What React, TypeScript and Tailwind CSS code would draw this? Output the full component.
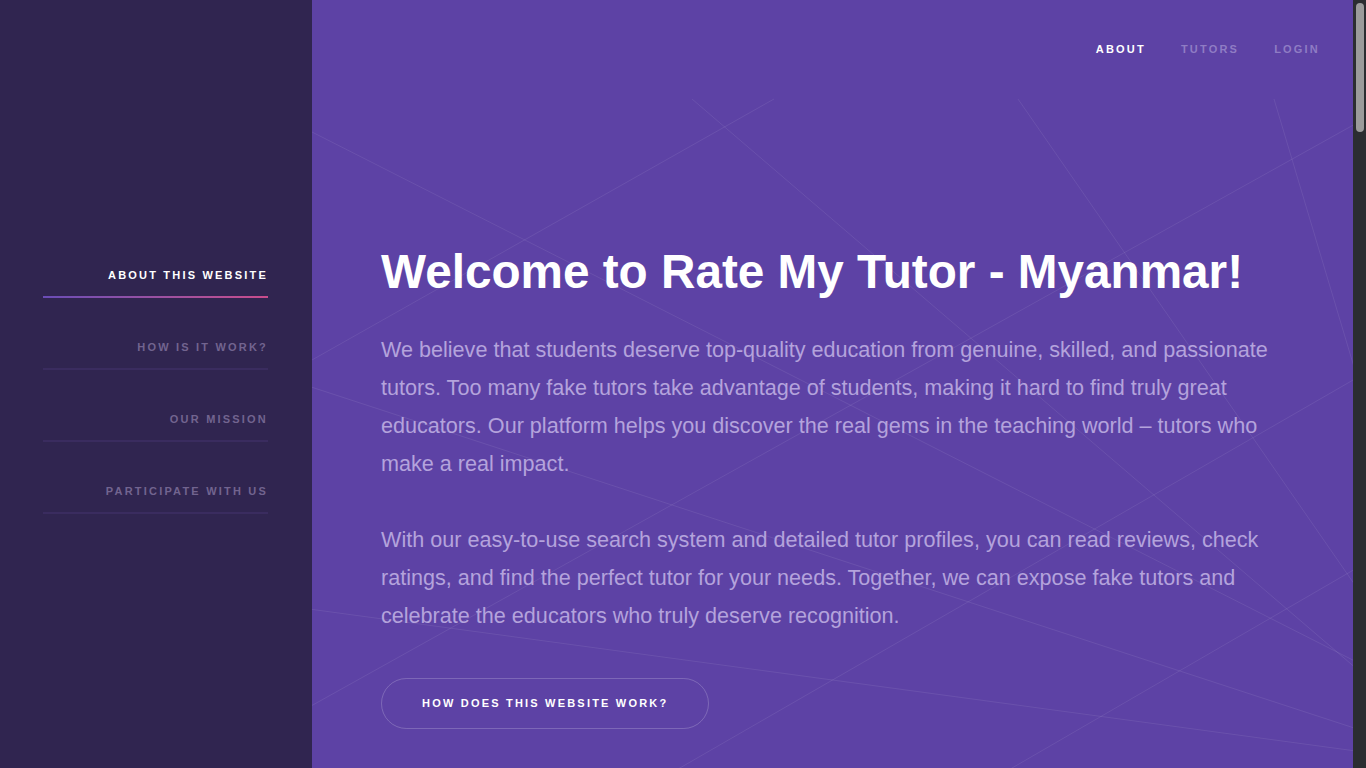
const sideLinks = [
  { label: 'About this website', active: true },
  { label: 'How is it work?', active: false },
  { label: 'Our mission', active: false },
  { label: 'Participate with us', active: false },
];

const topLinks = [
  { label: 'About', active: true },
  { label: 'Tutors', active: false },
  { label: 'Login', active: false },
];

// faint background strokes, page coordinates
const strokes: [number, number, number, number][] = [
  [774, 99, 250, 395],
  [692, 99, 1400, 706],
  [312, 132, 1400, 684],
  [1018, 99, 1400, 650],
  [1274, 99, 1400, 521],
  [1400, 95, 250, 740],
  [250, 367, 1400, 743],
  [250, 601, 1400, 757],
  [1400, 353, 600, 814],
  [1400, 543, 900, 833],
];

const Sidebar = () => (
  <aside className="h-screen w-[312px] shrink-0 bg-[#302550]">
    <nav className="flex flex-col gap-[44px] pl-[43px] pt-[268px]">
      {sideLinks.map((link) => (
        <a
          key={link.label}
          href="#"
          className="relative block w-[225px] pb-[14px] text-right"
        >
          <span
            className={`block text-[11px] font-bold uppercase leading-[14px] tracking-[0.2em] ${
              link.active ? 'text-white' : 'text-[#72648f]'
            }`}
          >
            {link.label}
          </span>
          <span
            className={`absolute bottom-[-2px] left-0 h-[2px] w-full ${
              link.active
                ? 'bg-gradient-to-r from-[#6a4cb6] to-[#c94c8c]'
                : 'bg-[#3a2c5f]'
            }`}
          />
        </a>
      ))}
    </nav>
  </aside>
);

const Hero = () => (
  <section className="relative h-screen min-w-0 flex-1 overflow-hidden bg-[#5d42a5]">
    <svg className="pointer-events-none absolute left-0 top-0 h-full w-full">
      <g transform="translate(-312 0)">
        {strokes.map(([x1, y1, x2, y2], i) => (
          <line
            key={i}
            x1={x1}
            y1={Math.max(y1, 99)}
            x2={x2}
            y2={y2}
            stroke="rgba(255,255,255,0.08)"
            strokeWidth={1}
          />
        ))}
      </g>
    </svg>

    <header className="relative flex h-[98px] items-center justify-end gap-[35px] pr-[33px]">
      {topLinks.map((link) => (
        <a
          key={link.label}
          href="#"
          className={`text-[11px] font-bold uppercase tracking-[0.2em] ${
            link.active ? 'text-white' : 'text-[#8f7cc4]'
          }`}
        >
          {link.label}
        </a>
      ))}
    </header>

    <div className="relative px-[69px] pt-[144px]">
      <h1 className="text-[47.7px] font-bold leading-[60px] text-white">
        Welcome to Rate My Tutor - Myanmar!
      </h1>
      <p className="mt-[29px] text-[21.6px] leading-[38px] text-[#b4a3dc]">
        We believe that students deserve top-quality education from genuine, skilled, and
        passionate tutors. Too many fake tutors take advantage of students, making it hard to
        find truly great educators. Our platform helps you discover the real gems in the
        teaching world – tutors who make a real impact.
      </p>
      <p className="mt-[38px] text-[21.6px] leading-[38px] text-[#b4a3dc]">
        With our easy-to-use search system and detailed tutor profiles, you can read reviews,
        check ratings, and find the perfect tutor for your needs. Together, we can expose fake
        tutors and celebrate the educators who truly deserve recognition.
      </p>
      <button className="mt-[43px] flex h-[51px] items-center rounded-full border border-white/20 px-[40px] text-[11px] font-bold uppercase tracking-[0.2em] text-white">
        How does this website work?
      </button>
    </div>
  </section>
);

const ScrollTrack = () => (
  <div className="flex h-screen w-[13px] shrink-0 justify-center bg-[#2b2d31] pt-[3px]">
    <div className="h-[129px] w-[8px] rounded-full bg-[#9b9b9b]" />
  </div>
);

export default function App() {
  return (
    <div className="flex h-screen overflow-hidden bg-[#5d42a5] font-['Liberation_Sans',Arial,sans-serif]">
      <Sidebar />
      <Hero />
      <ScrollTrack />
    </div>
  );
}
